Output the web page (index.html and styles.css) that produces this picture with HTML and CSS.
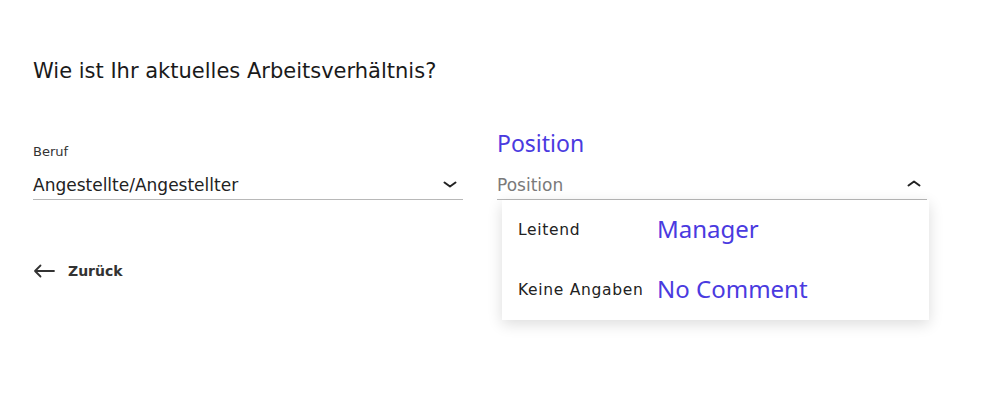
FILE: index.html
```html
<!DOCTYPE html>
<html lang="de">
<head>
<meta charset="utf-8">
<link rel="stylesheet" href="styles.css">
</head>
<body>
<main class="page">
  <h1 class="title">Wie ist Ihr aktuelles Arbeitsverhältnis?</h1>
  <div class="fields">
    <div class="field">
      <div class="label">Beruf</div>
      <div class="control">
        <span class="value">Angestellte/Angestellter</span>
        <svg class="chev" width="14" height="8" viewBox="0 0 14 8"><path d="M1.5 1.5 L7 5.5 L12.5 1.5" fill="none" stroke="#222" stroke-width="2" stroke-linecap="round" stroke-linejoin="round"/></svg>
      </div>
    </div>
    <div class="field open">
      <div class="annot annot-label">Position</div>
      <div class="control">
        <span class="value placeholder">Position</span>
        <svg class="chev" width="14" height="8" viewBox="0 0 14 8"><path d="M1.5 6.5 L7 2.5 L12.5 6.5" fill="none" stroke="#222" stroke-width="2" stroke-linecap="round" stroke-linejoin="round"/></svg>
      </div>
      <ul class="menu">
        <li class="option"><span class="opt-text">Leitend</span><span class="annot">Manager</span></li>
        <li class="option"><span class="opt-text">Keine Angaben</span><span class="annot">No Comment</span></li>
      </ul>
    </div>
  </div>
  <a class="back" href="#">
    <svg width="22" height="14" viewBox="0 0 22 14"><path d="M21 7 H2 M7.5 1.5 L2 7 L7.5 12.5" fill="none" stroke="#333" stroke-width="1.8" stroke-linecap="round" stroke-linejoin="round"/></svg>
    <span>Zurück</span>
  </a>
</main>
</body>
</html>
```
FILE: styles.css
```css
* { box-sizing: border-box; }
html, body { margin: 0; background: #fff; }
body {
  font-family: "DejaVu Sans", "Liberation Sans", sans-serif;
  color: #1a1a1a;
  width: 986px;
  height: 420px;
  overflow: hidden;
}
.page {
  padding: 56px 0 0 33px;
}
.title {
  margin: 0;
  font-size: 21px;
  font-weight: normal;
  line-height: 30px;
}
.fields {
  display: grid;
  grid-template-columns: 430px 430px;
  column-gap: 34px;
  align-items: end;
  margin-top: 44px;
}
.field { position: relative; }
.label {
  font-size: 13px;
  color: #333;
  line-height: 16px;
  margin-bottom: 10px;
}
.annot {
  font-family: "Noto Sans", "Open Sans", sans-serif;
  color: #4a3ae0;
}
.annot-label {
  font-size: 23px;
  line-height: 26px;
  margin-bottom: 14px;
}
.control {
  display: flex;
  justify-content: space-between;
  align-items: center;
  height: 30px;
  border-bottom: 1px solid #b8b8b8;
  padding-right: 4px;
}
.value {
  font-size: 17px;
  color: #222;
}
.placeholder { color: #7a7a7a; }
.chev { display: block; margin-right: 2px; }
.open .chev { margin-top: -4px; }
.menu {
  position: absolute;
  top: 100%;
  left: 5px;
  width: 427px;
  margin: 0;
  padding: 0;
  list-style: none;
  background: #fff;
  box-shadow: 0 4px 14px rgba(0,0,0,0.14);
  z-index: 2;
}
.option {
  display: flex;
  align-items: center;
  height: 60px;
  padding-left: 16px;
}
.opt-text {
  width: 139px;
  font-size: 15.5px;
  letter-spacing: 0.7px;
  color: #222;
}
.option .annot { font-size: 24px; margin-top: -4px; }
.back {
  display: inline-flex;
  align-items: center;
  gap: 13px;
  margin-top: 63px;
  text-decoration: none;
  color: #333;
  font-size: 14px;
  font-weight: bold;
}
.back svg { display: block; }
```
